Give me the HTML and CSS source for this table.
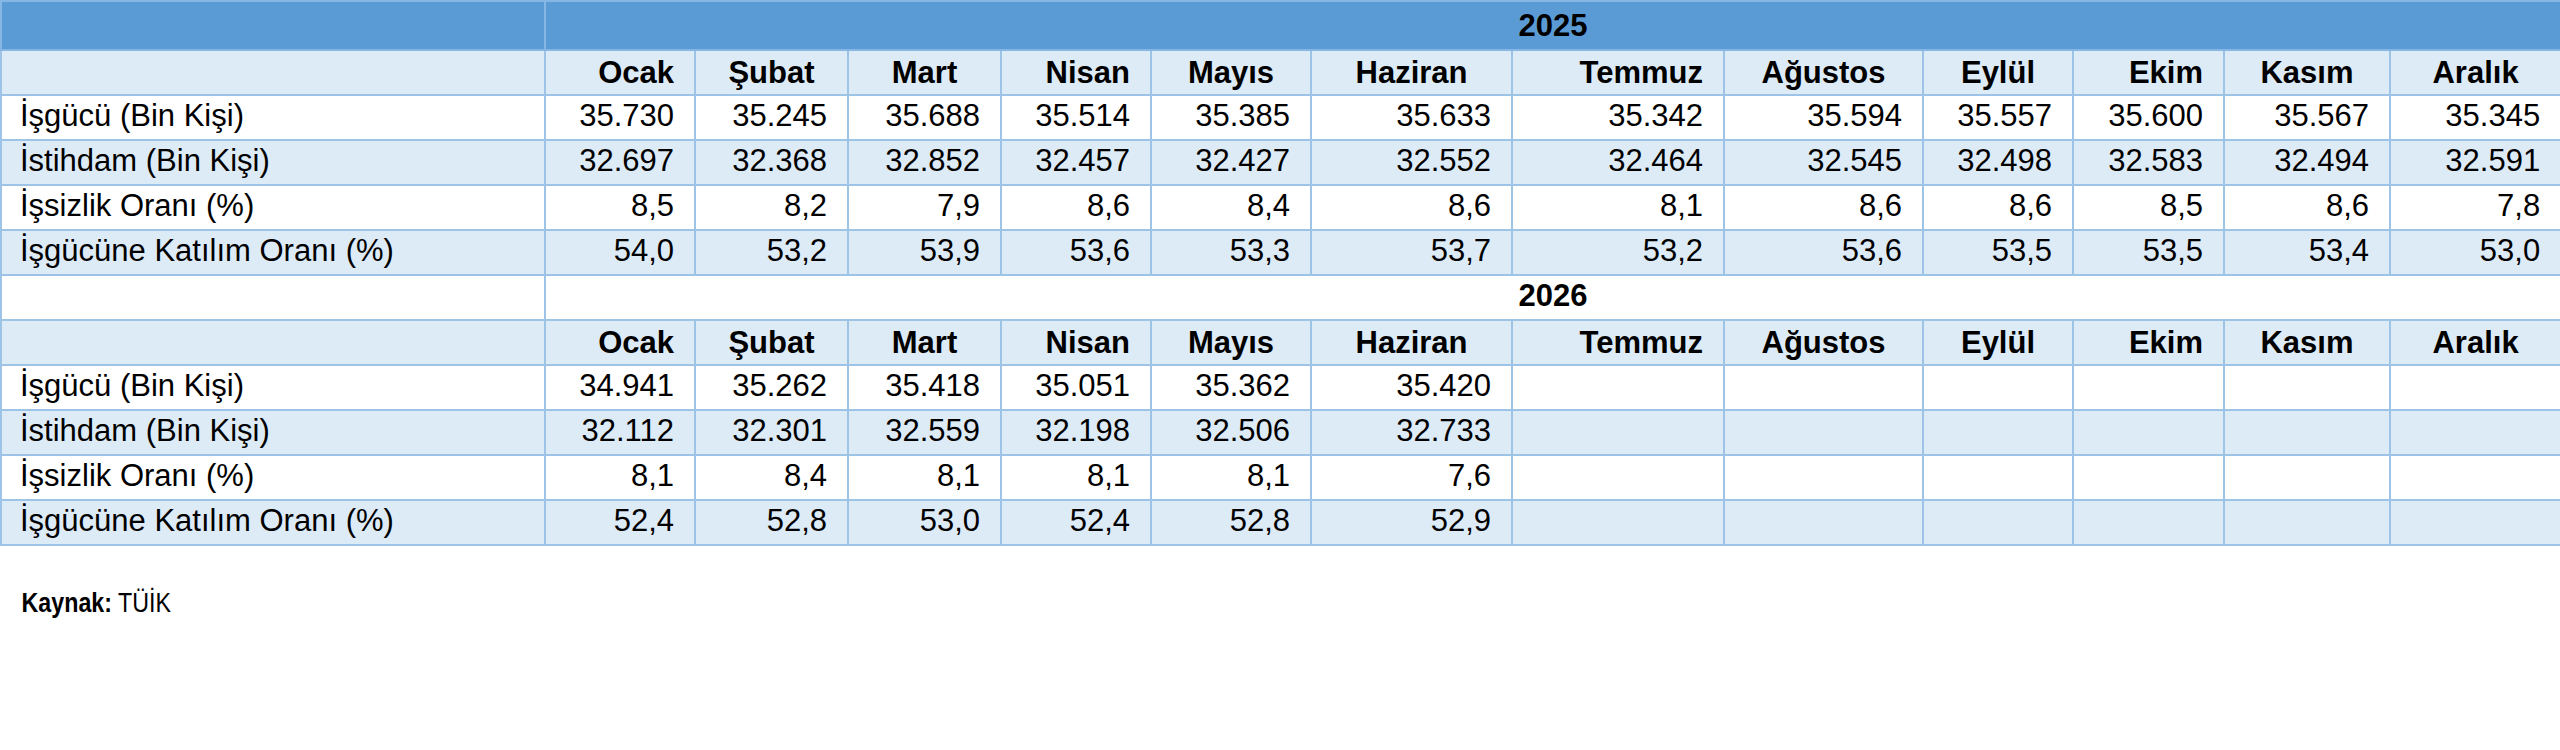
FILE: index.html
```html
<!DOCTYPE html>
<html lang="tr">
<head>
<meta charset="utf-8">
<title>İşgücü İstatistikleri</title>
<link rel="stylesheet" href="styles.css">
</head>
<body>
<table class="stats">
  <colgroup>
    <col class="c-label"><col class="c-ocak"><col class="c-subat"><col class="c-mart"><col class="c-nisan"><col class="c-mayis"><col class="c-haziran"><col class="c-temmuz"><col class="c-agustos"><col class="c-eylul"><col class="c-ekim"><col class="c-kasim"><col class="c-aralik">
  </colgroup>
  <tbody>
    <tr class="year-row year-blue">
      <td class="label"></td>
      <td class="year" colspan="12">2025</td>
    </tr>
    <tr class="month-row">
      <td class="label"></td>
      <td class="m-right">Ocak</td><td class="m-center">Şubat</td><td class="m-center">Mart</td><td class="m-right">Nisan</td><td class="m-center">Mayıs</td><td class="m-center">Haziran</td><td class="m-right">Temmuz</td><td class="m-center">Ağustos</td><td class="m-center">Eylül</td><td class="m-right">Ekim</td><td class="m-center">Kasım</td><td class="m-center">Aralık</td>
    </tr>
    <tr class="data-row row-white">
      <td class="label">İşgücü (Bin Kişi)</td>
      <td>35.730</td><td>35.245</td><td>35.688</td><td>35.514</td><td>35.385</td><td>35.633</td><td>35.342</td><td>35.594</td><td>35.557</td><td>35.600</td><td>35.567</td><td>35.345</td>
    </tr>
    <tr class="data-row row-blue">
      <td class="label">İstihdam (Bin Kişi)</td>
      <td>32.697</td><td>32.368</td><td>32.852</td><td>32.457</td><td>32.427</td><td>32.552</td><td>32.464</td><td>32.545</td><td>32.498</td><td>32.583</td><td>32.494</td><td>32.591</td>
    </tr>
    <tr class="data-row row-white">
      <td class="label">İşsizlik Oranı (%)</td>
      <td>8,5</td><td>8,2</td><td>7,9</td><td>8,6</td><td>8,4</td><td>8,6</td><td>8,1</td><td>8,6</td><td>8,6</td><td>8,5</td><td>8,6</td><td>7,8</td>
    </tr>
    <tr class="data-row row-blue">
      <td class="label">İşgücüne Katılım Oranı (%)</td>
      <td>54,0</td><td>53,2</td><td>53,9</td><td>53,6</td><td>53,3</td><td>53,7</td><td>53,2</td><td>53,6</td><td>53,5</td><td>53,5</td><td>53,4</td><td>53,0</td>
    </tr>
    <tr class="year-row year-white">
      <td class="label"></td>
      <td class="year" colspan="12">2026</td>
    </tr>
    <tr class="month-row">
      <td class="label"></td>
      <td class="m-right">Ocak</td><td class="m-center">Şubat</td><td class="m-center">Mart</td><td class="m-right">Nisan</td><td class="m-center">Mayıs</td><td class="m-center">Haziran</td><td class="m-right">Temmuz</td><td class="m-center">Ağustos</td><td class="m-center">Eylül</td><td class="m-right">Ekim</td><td class="m-center">Kasım</td><td class="m-center">Aralık</td>
    </tr>
    <tr class="data-row row-white">
      <td class="label">İşgücü (Bin Kişi)</td>
      <td>34.941</td><td>35.262</td><td>35.418</td><td>35.051</td><td>35.362</td><td>35.420</td><td></td><td></td><td></td><td></td><td></td><td></td>
    </tr>
    <tr class="data-row row-blue">
      <td class="label">İstihdam (Bin Kişi)</td>
      <td>32.112</td><td>32.301</td><td>32.559</td><td>32.198</td><td>32.506</td><td>32.733</td><td></td><td></td><td></td><td></td><td></td><td></td>
    </tr>
    <tr class="data-row row-white">
      <td class="label">İşsizlik Oranı (%)</td>
      <td>8,1</td><td>8,4</td><td>8,1</td><td>8,1</td><td>8,1</td><td>7,6</td><td></td><td></td><td></td><td></td><td></td><td></td>
    </tr>
    <tr class="data-row row-blue">
      <td class="label">İşgücüne Katılım Oranı (%)</td>
      <td>52,4</td><td>52,8</td><td>53,0</td><td>52,4</td><td>52,8</td><td>52,9</td><td></td><td></td><td></td><td></td><td></td><td></td>
    </tr>
  </tbody>
</table>
<p class="source"><strong>Kaynak:</strong> TÜİK</p>
</body>
</html>
```

FILE: styles.css
```css
html, body {
  margin: 0;
  padding: 0;
  background: #ffffff;
}

body {
  font-family: "Liberation Sans", Arial, sans-serif;
  color: #000000;
}

.stats {
  width: 2560px;
  table-layout: fixed;
  border-collapse: collapse;
  font-size: 31px;
}

.c-label { width: 544px; }
.c-ocak { width: 150px; }
.c-subat { width: 153px; }
.c-mart { width: 153px; }
.c-nisan { width: 150px; }
.c-mayis { width: 160px; }
.c-haziran { width: 201px; }
.c-temmuz { width: 212px; }
.c-agustos { width: 199px; }
.c-eylul { width: 150px; }
.c-ekim { width: 151px; }
.c-kasim { width: 166px; }
.c-aralik { width: 171px; }

.stats td {
  border: 2px solid #9dc3e6;
  height: 45px;
  padding: 0 20px 5px 20px;
  vertical-align: bottom;
  text-align: right;
  white-space: nowrap;
  line-height: normal;
  box-sizing: border-box;
}

.stats td.label {
  text-align: left;
  padding-left: 18px;
}

.year-row td {
  font-weight: bold;
}

.year-row td.year {
  text-align: center;
}

.year-blue td {
  background: #5b9bd5;
  height: 49px;
  border-color: #86b6e3;
}

.year-white td {
  background: #ffffff;
}

.month-row td {
  background: #ddebf7;
  font-weight: bold;
  padding-bottom: 3px;
}

.month-row td.m-center {
  text-align: center;
  padding-left: 4px;
  padding-right: 4px;
}

.row-white td {
  background: #ffffff;
}

.row-blue td {
  background: #ddebf7;
}

.source {
  margin: 41px 0 0 0;
  padding-left: 26px;
  font-family: "Liberation Sans Narrow", "Arial Narrow", "Liberation Sans", sans-serif;
  font-size: 28px;
  transform: scaleX(0.83);
  transform-origin: left center;
}

.source strong {
  font-weight: bold;
}
```
